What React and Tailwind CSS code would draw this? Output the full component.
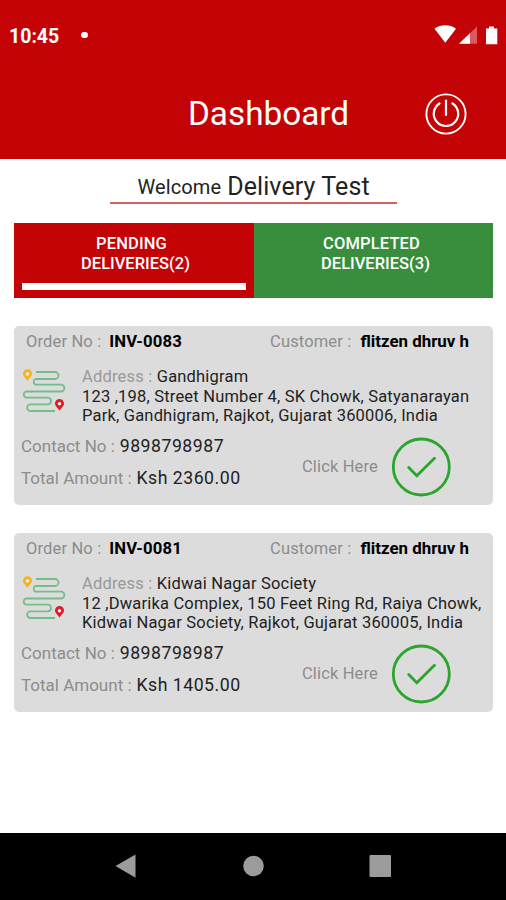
import { useState } from 'react'

const TABS = [
  { id: 'pending', label: 'PENDING', count: 2, bg: 'bg-[#c40306]', indent: 'pl-[3.500px]' },
  { id: 'completed', label: 'COMPLETED', count: 3, bg: 'bg-[#388e3c]', indent: 'pl-[4.500px]' },
]

const ORDERS = [
  {
    id: 'INV-0083',
    customer: 'flitzen dhruv h',
    place: 'Gandhigram',
    lines: ['123 ,198, Street Number 4, SK Chowk, Satyanarayan', 'Park, Gandhigram, Rajkot, Gujarat 360006, India'],
    contact: '9898798987',
    total: 'Ksh 2360.00',
  },
  {
    id: 'INV-0081',
    customer: 'flitzen dhruv h',
    place: 'Kidwai Nagar Society',
    lines: ['12 ,Dwarika Complex, 150 Feet Ring Rd, Raiya Chowk,', 'Kidwai Nagar Society, Rajkot, Gujarat 360005, India'],
    contact: '9898798987',
    total: 'Ksh 1405.00',
  },
]

function StatusBar() {
  return (
    <div className="flex h-[70px] items-center pl-[9px] pr-[7px] text-white">
      <span className="pt-[3px] text-[19.500px] font-bold leading-none">10:45</span>
      <span className="ml-[22px] size-[6.500px] rounded-full bg-white" />
      <svg width="66" height="22" viewBox="0 0 66 22" className="ml-auto" fill="currentColor">
        <path d="M1.500 4.800C7.500 0.200 17 0.200 23 4.800L12.300 18.700Z" />
        <path d="M26 19.700L44 2.500V19.700Z" opacity=".35" />
        <path d="M26 19.700L37 9.200V19.700Z" />
        <path d="M56 2.500H61V4.500H64.300V20.200H53V4.500H56Z" />
      </svg>
    </div>
  )
}

function PowerIcon() {
  return (
    <svg width="42" height="42" viewBox="0 0 42 42" fill="none" stroke="white" strokeLinecap="round">
      <circle cx="21" cy="21" r="19.600" strokeWidth="1.900" />
      <path d="M14.500 10.500A12.200 12.200 0 1 0 27.500 10.500" strokeWidth="2.200" />
      <path d="M21 7.500V22" strokeWidth="2.200" />
    </svg>
  )
}

function Pin({ x, y, color }) {
  return (
    <g transform={`translate(${x} ${y})`}>
      <path d="M0 11.300C-1.500 8.300-4.500 6.700-4.500 4A4.500 4.500 0 0 1 4.500 4C4.500 6.700 1.500 8.300 0 11.300Z" fill={color} />
      <circle cx="0" cy="4.200" r="1.800" fill="#eee" />
    </g>
  )
}

function RouteIcon() {
  return (
    <svg width="44" height="44" viewBox="0 0 44 44" fill="none">
      <path
        d="M14 3H33A3.300 3.300 0 0 1 33 10H13.500A3.100 3.100 0 0 0 13.500 15.700H39A3.200 3.200 0 0 1 39 22.500H4A3.200 3.200 0 0 0 4 28.600H26A3.200 3.200 0 0 1 29 32A3.300 3.300 0 0 1 26 35.300H8.500A3.100 3.100 0 0 0 8.500 42H33"
        stroke="#74bd87"
        strokeWidth="1.800"
      />
      <Pin x={5.5} y={0.8} color="#f2b51d" />
      <Pin x={37.5} y={30.5} color="#dd1c24" />
    </svg>
  )
}

function CheckIcon() {
  return (
    <svg width="60" height="60" viewBox="0 0 60 60" fill="none" stroke="#2ba52b">
      <circle cx="30.300" cy="30" r="28" strokeWidth="2.800" />
      <path d="M17.700 30.500L25.800 38.700L43.500 21.300" strokeWidth="2.800" strokeLinecap="round" />
    </svg>
  )
}

function OrderCard({ order }) {
  return (
    <article className="h-[179.500px] rounded-[5px] bg-[#dcdcdc] text-[#222]">
      <div className="flex h-8 items-baseline pl-3 pt-[3px] text-[16.500px] tracking-[0.15px]">
        <div className="w-[244px]">
          <span className="text-[#8c8c8c]">Order No :</span>
          <span className="ml-2 text-[16.700px] font-bold text-black">{order.id}</span>
        </div>
        <div className="whitespace-nowrap">
          <span className="text-[#8c8c8c]">Customer :</span>
          <span className="ml-[9px] text-[16.900px] font-bold tracking-[0px] text-black">{order.customer}</span>
        </div>
      </div>

      <div className="flex pl-2 pt-[9.500px]">
        <div className="w-[60px] shrink-0 pt-[2px]">
          <RouteIcon />
        </div>
        <div className="whitespace-nowrap text-[16.500px] leading-[19.700px] tracking-[0.19px]">
          <p><span className="text-[#999]">Address :</span> {order.place}</p>
          {order.lines.map(line => <p key={line}>{line}</p>)}
        </div>
      </div>

      <div className="flex justify-between pl-[7px] pr-[42px]">
        <div className="pt-[3.500px] text-[17.700px] leading-8 tracking-[0.5px]">
          <p><span className="text-[17px] tracking-[0px] text-[#8c8c8c]">Contact No :</span> {order.contact}</p>
          <p><span className="text-[17px] tracking-[0px] text-[#8c8c8c]">Total Amount :</span> {order.total}</p>
        </div>
        <button className="mt-[11px] flex h-[60px] items-center gap-[13px] text-[16.500px] tracking-[0.15px] text-[#8c8c8c]">
          Click Here
          <CheckIcon />
        </button>
      </div>
    </article>
  )
}

function NavBar() {
  return (
    <nav className="h-[66.600px] bg-black">
      <svg width="506" height="66" viewBox="0 0 506 66" fill="#9b9b9b">
        <path d="M115.500 33L135.500 21.400V44.700Z" />
        <circle cx="253.500" cy="33" r="10.300" />
        <rect x="369.500" y="22" width="21.500" height="22" rx="1" />
      </svg>
    </nav>
  )
}

export default function App() {
  const [active, setActive] = useState('pending')

  return (
    <div className="flex h-[900px] w-[506px] flex-col overflow-hidden bg-white font-['Roboto',sans-serif]">
      <header className="h-[158.500px] bg-[#c40306]">
        <StatusBar />
        <div className="flex h-[88px] items-center pl-[188px]">
          <h1 className="w-[237px] text-[33.300px] leading-none text-white">Dashboard</h1>
          <button aria-label="Log out"><PowerIcon /></button>
        </div>
      </header>

      <main className="flex-1 px-[14px]">
        <div className="mx-auto mt-[9px] h-9 w-[287px] whitespace-nowrap border-b-2 border-[#d4605f] pl-[28px] leading-[38px] text-[#222]">
          <span className="relative -top-px text-[20px] tracking-[0.1px]">Welcome</span>
          <span className="ml-[6px] text-[25px] tracking-[0.1px]">Delivery Test</span>
        </div>

        <div className="mt-[19.500px] flex w-[479px]">
          {TABS.map(t => (
            <button key={t.id} onClick={() => setActive(t.id)}
              className={`flex h-[75px] flex-1 flex-col px-2 pt-[11px] text-[16.500px] font-medium leading-5 text-white ${t.bg}`}>
              <span className={`w-full text-center ${t.indent}`}>
                <span className="mr-2 block tracking-[0.15px]">{t.label}</span>
                <span className="block">DELIVERIES({t.count})</span>
              </span>
              {active === t.id && <span className="mt-[9px] h-[7px] w-full bg-white" />}
            </button>
          ))}
        </div>

        <section className="mt-[27.500px] flex w-[479px] flex-col gap-[27.500px]">
          {ORDERS.map(o => <OrderCard key={o.id} order={o} />)}
        </section>
      </main>

      <NavBar />
    </div>
  )
}
